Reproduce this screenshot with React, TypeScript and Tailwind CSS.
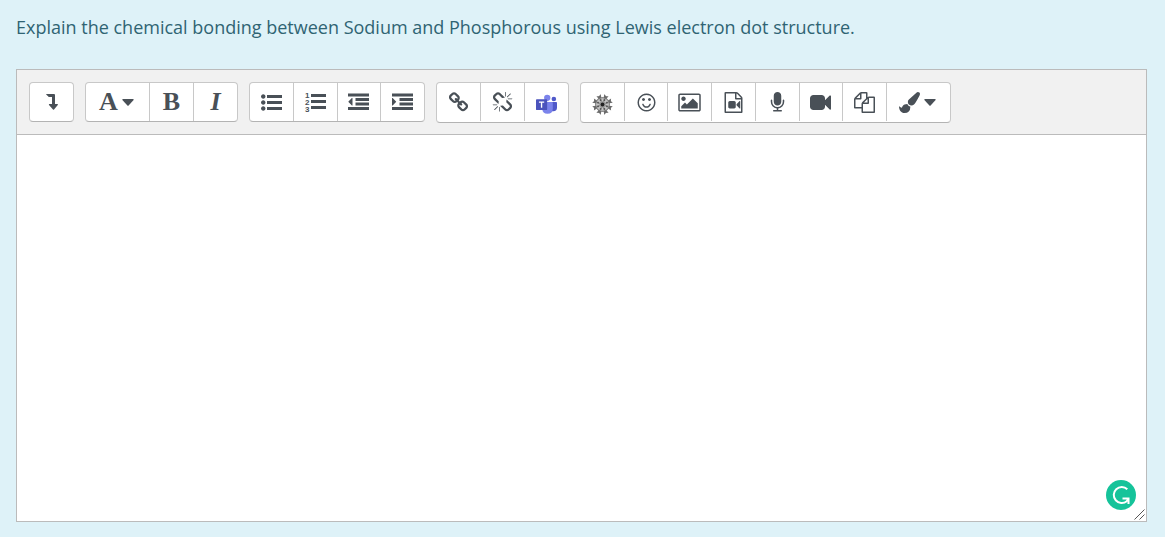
import type { ReactNode } from "react";

const PATHS = {
  listUl:
    "M384 1408q0 80-56 136t-136 56-136-56-56-136 56-136 136-56 136 56 56 136zm0-512q0 80-56 136t-136 56-136-56-56-136 56-136 136-56 136 56 56 136zm1408 416v192q0 13-9.5 22.5t-22.5 9.5h-1216q-13 0-22.5-9.5t-9.5-22.5v-192q0-13 9.5-22.5t22.5-9.5h1216q13 0 22.5 9.5t9.5 22.5zm-1408-928q0 80-56 136t-136 56-136-56-56-136 56-136 136-56 136 56 56 136zm1408 416v192q0 13-9.5 22.5t-22.5 9.5h-1216q-13 0-22.5-9.5t-9.5-22.5v-192q0-13 9.5-22.5t22.5-9.5h1216q13 0 22.5 9.5t9.5 22.5zm0-512v192q0 13-9.5 22.5t-22.5 9.5h-1216q-13 0-22.5-9.5t-9.5-22.5v-192q0-13 9.5-22.5t22.5-9.5h1216q13 0 22.5 9.5t9.5 22.5z",
  outdent:
    "M384 544v576q0 13-9.5 22.5t-22.5 9.5q-14 0-23-9l-288-288q-9-9-9-23t9-23l288-288q9-9 23-9 13 0 22.5 9.5t9.5 22.5zM0 1280h1792v256H0zM640 896h1152v256H640zM640 512h1152v256H640zM0 128h1792v256H0z",
  indent:
    "M352 832q0 14-9 23l-288 288q-9 9-23 9-13 0-22.5-9.5t-9.5-22.5v-576q0-13 9.5-22.5t22.5-9.5q14 0 23 9l288 288q9 9 9 23zM0 1280h1792v256H0zM640 896h1152v256H640zM640 512h1152v256H640zM0 128h1792v256H0z",
  link:
    "M1520 1216q0-40-28-68l-208-208q-28-28-68-28-42 0-72 32 3 3 19 18.5t21.5 21.5 15 19 13 25.5 3.5 27.5q0 40-28 68t-68 28q-15 0-27.5-3.5t-25.5-13-19-15-21.5-21.5-18.5-19q-33 31-33 73 0 40 28 68l206 207q27 27 68 27 40 0 68-26l147-146q28-28 28-67zm-703-705q0-40-28-68l-206-207q-28-28-68-28-39 0-68 27l-147 146q-28 28-28 67 0 40 28 68l208 208q27 27 68 27 42 0 72-31-3-3-19-18.5t-21.5-21.5-15-19-13-25.5-3.5-27.5q0-40 28-68t68-28q15 0 27.5 3.5t25.5 13 19 15 21.5 21.5 18.5 19q33-31 33-73zm895 705q0 120-85 203l-147 146q-83 83-203 83-121 0-204-85l-206-207q-83-83-83-203 0-123 88-209l-88-88q-86 88-208 88-120 0-204-84l-208-208q-84-84-84-204t85-203l147-146q83-83 203-83 121 0 204 85l206 207q83 83 83 203 0 123-88 209l88 88q86-88 208-88 120 0 204 84l208 208q84 84 84 204z",
  unlink:
    "M503 1271l-256 256q-10 9-23 9-12 0-23-9-9-10-9-23t9-23l256-256q10-9 23-9t23 9q9 10 9 23t-9 23zm169 41v320q0 14-9 23t-23 9-23-9-9-23v-320q0-14 9-23t23-9 23 9 9 23zm-224-224q0 14-9 23t-23 9h-320q-14 0-23-9t-9-23 9-23 23-9h320q14 0 23 9t9 23zm1264 128q0 120-85 203l-147 146q-83 83-203 83-121 0-204-85l-334-335q-21-21-42-56l239-18 273 274q28 28 68 27.5t68-27.5l147-146q28-28 28-67 0-40-28-68l-274-275 18-239q35 21 56 42l336 336q84 86 84 204zm-617-724l-239 18-273-274q-28-28-68-28-39 0-68 27l-147 146q-28 28-28 67 0 40 28 68l274 274-18 240q-35-21-56-42l-336-336q-84-86-84-204 0-120 85-203l147-146q83-83 203-83 121 0 204 85l334 335q21 21 42 56zm633 84q0 14-9 23t-23 9h-320q-14 0-23-9t-9-23 9-23 23-9h320q14 0 23 9t9 23zm-544-544v320q0 14-9 23t-23 9-23-9-9-23v-320q0-14 9-23t23-9 23 9 9 23zm407 151l-256 256q-11 9-23 9t-23-9q-9-10-9-23t9-23l256-256q10-9 23-9t23 9q9 10 9 23t-9 23z",
  smile:
    "M1262 1075q-37 121-138 195t-228 74-228-74-138-195q-8-25 4-48.5t38-31.5q25-8 48.5 4t31.5 38q25 80 92.5 129.5t151.5 49.5 151.5-49.5 92.5-129.5q8-26 32-38t49-4 37 31.5 4 48.5zm-494-435q0 53-37.5 90.5t-90.5 37.5-90.5-37.5-37.5-90.5 37.5-90.5 90.5-37.5 90.5 37.5 37.5 90.5zm512 0q0 53-37.5 90.5t-90.5 37.5-90.5-37.5-37.5-90.5 37.5-90.5 90.5-37.5 90.5 37.5 37.5 90.5zm256 256q0-130-51-248.5t-136.5-204-204-136.5-248.5-51-248.5 51-204 136.5-136.5 204-51 248.5 51 248.5 136.5 204 204 136.5 248.5 51 248.5-51 204-136.5 136.5-204 51-248.5zm128 0q0 209-103 385.5t-279.5 279.5-385.5 103-385.5-103-279.5-279.5-103-385.5 103-385.5 279.5-279.5 385.5-103 385.5 103 279.5 279.5 103 385.5z",
  picture:
    "M576 576q0 80-56 136t-136 56-136-56-56-136 56-136 136-56 136 56 56 136zm1024 384v448h-1408v-192l320-320 160 160 512-512zm96-704h-1600q-13 0-22.5 9.5t-9.5 22.5v1216q0 13 9.5 22.5t22.5 9.5h1600q13 0 22.5-9.5t9.5-22.5v-1216q0-13-9.5-22.5t-22.5-9.5zm160 32v1216q0 66-47 113t-113 47h-1600q-66 0-113-47t-47-113v-1216q0-66 47-113t113-47h1600q66 0 113 47t47 113z",
  fileVideo:
    "M1596 380q28 28 48 76t20 88v1152q0 40-28 68t-68 28h-1344q-40 0-68-28t-28-68v-1600q0-40 28-68t68-28h896q40 0 88 20t76 48zm-444-244v376h376q-10-29-22-41l-313-313q-12-12-41-22zm384 1528v-1024h-416q-40 0-68-28t-28-68v-416h-768v1536h1280zm-576-896q52 0 90 38t38 90v384q0 52-38 90t-90 38h-384q-52 0-90-38t-38-90v-384q0-52 38-90t90-38h384zm492 2q20 8 20 30v576q0 22-20 30-8 2-12 2-14 0-23-9l-265-266v-90l265-266q9-9 23-9 4 0 12 2z",
  microphone:
    "M1472 704v128q0 221-147.5 384.5t-364.5 187.5v132h256q26 0 45 19t19 45-19 45-45 19h-640q-26 0-45-19t-19-45 19-45 45-19h256v-132q-217-24-364.5-187.5t-147.5-384.5v-128q0-26 19-45t45-19 45 19 19 45v128q0 185 131.5 316.5t316.5 131.5 316.5-131.5 131.5-316.5v-128q0-26 19-45t45-19 45 19 19 45zm-256-384v512q0 132-94 226t-226 94-226-94-94-226v-512q0-132 94-226t226-94 226 94 94 226z",
  video:
    "M1792 352v1088q0 42-39 59-13 5-25 5-27 0-45-19l-403-403v166q0 119-84.5 203.5t-203.5 84.5h-704q-119 0-203.5-84.5t-84.5-203.5v-704q0-119 84.5-203.5t203.5-84.5h704q119 0 203.5 84.5t84.5 203.5v165l403-402q18-19 45-19 12 0 25 5 39 17 39 59z",
  files:
    "M1696 384q40 0 68 28t28 68v1216q0 40-28 68t-68 28h-960q-40 0-68-28t-28-68v-288h-544q-40 0-68-28t-28-68v-672q0-40 20-88t48-76l408-408q28-28 76-48t88-20h416q40 0 68 28t28 68v328q68-40 128-40h416zm-544 213l-299 299h299v-299zm-640-384l-299 299h299v-299zm196 647l316-316v-416h-384v416q0 40-28 68t-68 28h-416v640h512v-256q0-40 20-88t48-76zm956 804v-1152h-384v416q0 40-28 68t-68 28h-416v640h896z",
  brush:
    "M1615 0q70 0 122 46.5t52 116.5q0 63-45 151-332 629-465 752-97 91-218 91-126 0-216.5-92.5t-90.5-219.5q0-128 92-212l638-579q59-54 131-54zm-909 1034q39 76 106.5 130t150.5 76l1 71q4 213-129.5 347t-348.5 134q-123 0-218-46.5t-152.5-127.5-86.5-183-29-220q7 5 41 30t62 44.5 59 36.5 46 17q41 0 55-37 25-66 57.5-112.5t69.5-76 88-47.5 103-25.5 125-10.5z",
};

function Glyph({ name }: { name: keyof typeof PATHS }) {
  return (
    <svg viewBox="0 0 1792 1792" className="h-[21px] w-[21px] overflow-visible" fill="currentColor" aria-hidden="true">
      <path d={PATHS[name]} />
    </svg>
  );
}

function Caret() {
  return (
    <svg viewBox="0 0 12 7" className="h-[7px] w-3" fill="currentColor" aria-hidden="true">
      <path d="M.8 0h10.4q.8.3.4 1L6.600 6.500q-.6.5-1.200 0L.4 1Q0 .3.8 0z" />
    </svg>
  );
}

function LevelDown() {
  return (
    <svg viewBox="0 0 12 16" className="h-4 w-3" fill="currentColor" aria-hidden="true">
      <path d="M.4 0H8q1 0 1 1v9h2.400q.8.1.4.9L8 15.600q-.5.5-1 0L3 10.900q-.4-.8.4-.9H6V3H2.800L.2.6Q0 .1.4 0z" />
    </svg>
  );
}

function ListOl() {
  return (
    <svg viewBox="0 0 21 20" className="h-5 w-[21px] overflow-visible" fill="currentColor" aria-hidden="true">
      <g fontFamily="Liberation Sans, sans-serif" fontSize="8" fontWeight="700">
        <text x="0" y="6">1</text>
        <text x="0" y="13">2</text>
        <text x="0" y="20">3</text>
      </g>
      <path d="M6 2h15v3H6zM6 8h15v3H6zM6 14h15v3H6z" />
    </svg>
  );
}

function Teams() {
  return (
    <svg viewBox="0 0 20 20" className="h-[21px] w-[21px] translate-y-0.5" aria-hidden="true">
      <circle cx="17" cy="4.800" r="2.200" fill="#5059c9" />
      <path d="M13 7.500h6.300q.7 0 .7.700v5q0 3.300-3.500 3.300H13z" fill="#5059c9" />
      <circle cx="10.700" cy="3.600" r="3" fill="#7b83eb" />
      <path d="M6 7.500h9.200q.8 0 .8.800v5.500q0 5-5 5t-5-5z" fill="#7b83eb" />
      <rect x="0" y="5" width="10.600" height="10.300" rx=".8" fill="#4b53bc" />
      <path d="M2.800 7.800h5M5.300 7.800v5.200" stroke="#fff" strokeWidth="1.300" />
    </svg>
  );
}

const SPOKES = [0, 45, 90, 135, 180, 225, 270, 315];

function Wheel() {
  return (
    <svg viewBox="-10 -10 20 20" className="h-[21px] w-[21px] translate-y-0.5" aria-hidden="true">
      <circle r="6.600" fill="#c4c4c4" stroke="#8a8a8a" strokeWidth="1.200" />
      {SPOKES.map((a) => (
        <g key={a} transform={`rotate(${a + 22.5})`}>
          <path d="M0-2V-8" stroke="#888" strokeWidth="1" />
          <path d="M-2.200-9.800Q-1-8.800 0-8.800T2.200-9.800L1.400-6.300h-2.800z" fill="#6c6c6c" />
          <circle cy="-4.600" r=".9" fill="#555" />
        </g>
      ))}
      <circle r="3" fill="#999" />
      <circle r="1.800" fill="#222" />
    </svg>
  );
}

function Tool({ label, wide, children }: { label: string; wide?: boolean; children: ReactNode }) {
  return (
    <button
      type="button"
      aria-label={label}
      title={label}
      className={
        wide
          ? "flex w-16 shrink-0 items-center justify-center gap-1 border-l border-[#c8c8c8] pr-0.5 first:w-[63px] first:border-l-0 hover:bg-gray-100"
          : "flex flex-1 items-center justify-center border-l border-[#c8c8c8] first:border-l-0 hover:bg-gray-100"
      }
    >
      {children}
    </button>
  );
}

function Group({ size, children }: { size: string; children: ReactNode }) {
  return (
    <div
      role="group"
      className={`flex overflow-hidden rounded border border-[#c8c8c8] border-b-[#b3b3b3] bg-white ${size}`}
    >
      {children}
    </div>
  );
}

export default function App() {
  return (
    <main className="min-h-screen bg-[#def2f8] px-4 pt-3.5 pb-4 font-['Open_Sans','Noto_Sans',sans-serif] text-[#2f6473]">
      <label htmlFor="answer" className="block pb-7 text-lg leading-[27px]">
        Explain the chemical bonding between Sodium and Phosphorous using Lewis electron dot structure.
      </label>
      <div className="mr-0.5 border border-[#bbb] bg-white">
        <div
          role="toolbar"
          aria-label="Formatting"
          className="flex min-h-[65px] flex-wrap items-start gap-[11px] border-b border-[#bbb] bg-[#f1f1f1] p-3 pb-[11px] text-[#495057]"
        >
          <Group size="h-10 w-[45px]">
            <Tool label="Show more buttons"><LevelDown /></Tool>
          </Group>
          <Group size="h-10 w-[153px]">
            <Tool label="Paragraph styles" wide>
              <span className="font-['Liberation_Serif',serif] text-[26px] leading-6 font-bold">A</span>
              <Caret />
            </Tool>
            <Tool label="Bold">
              <span className="font-['Liberation_Serif',serif] text-[26px] leading-6 font-bold">B</span>
            </Tool>
            <Tool label="Italic">
              <span className="font-['Liberation_Serif',serif] text-[26px] leading-6 font-bold italic">I</span>
            </Tool>
          </Group>
          <Group size="h-10 w-[176px]">
            <Tool label="Unordered list"><Glyph name="listUl" /></Tool>
            <Tool label="Ordered list"><ListOl /></Tool>
            <Tool label="Outdent"><Glyph name="outdent" /></Tool>
            <Tool label="Indent"><Glyph name="indent" /></Tool>
          </Group>
          <Group size="h-[41px] w-[133px] pb-px">
            <Tool label="Link"><Glyph name="link" /></Tool>
            <Tool label="Unlink"><Glyph name="unlink" /></Tool>
            <Tool label="Teams meeting"><Teams /></Tool>
          </Group>
          <Group size="h-[41px] w-[371px] pb-px">
            <Tool label="Structure editor"><Wheel /></Tool>
            <Tool label="Emoji picker"><Glyph name="smile" /></Tool>
            <Tool label="Insert image"><Glyph name="picture" /></Tool>
            <Tool label="Insert media file"><Glyph name="fileVideo" /></Tool>
            <Tool label="Record audio"><Glyph name="microphone" /></Tool>
            <Tool label="Record video"><Glyph name="video" /></Tool>
            <Tool label="Manage files"><Glyph name="files" /></Tool>
            <Tool label="Text colour" wide>
              <Glyph name="brush" />
              <Caret />
            </Tool>
          </Group>
        </div>
        <div className="relative">
          <textarea
            id="answer"
            className="block h-[386px] w-full resize-y bg-white p-3 text-base text-gray-800 outline-none"
          />
          <svg
            viewBox="0 0 12 12"
            className="pointer-events-none absolute right-0 bottom-0 h-3 w-3 bg-white"
            stroke="#555"
            aria-hidden="true"
          >
            <path d="M.5 10.500l10-10M5.500 10.500l5-5" />
          </svg>
          <button
            type="button"
            aria-label="Writing assistant"
            className="absolute right-2.5 bottom-[11px] h-[30px] w-[30px] rounded-full bg-[#15c39a]"
          >
            <svg viewBox="0 0 30 30" className="h-full w-full" fill="none" stroke="#fff" strokeWidth="2" aria-hidden="true">
              <path d="M21.300 9.200A8 8 0 1 0 20.800 21.200L22 19" />
              <path d="M16.500 18.500H22.500V24" />
            </svg>
          </button>
        </div>
      </div>
    </main>
  );
}
